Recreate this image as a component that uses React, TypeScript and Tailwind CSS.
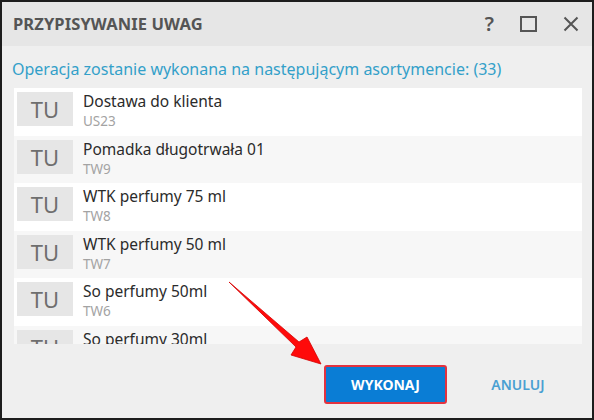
import React from "react";

type Item = { name: string; code: string };

const items: Item[] = [
  { name: "Dostawa do klienta", code: "US23" },
  { name: "Pomadka długotrwała 01", code: "TW9" },
  { name: "WTK perfumy 75 ml", code: "TW8" },
  { name: "WTK perfumy 50 ml", code: "TW7" },
  { name: "So perfumy 50ml", code: "TW6" },
  { name: "So perfumy 30ml", code: "TW5" },
];

function Row({ item, odd }: { item: Item; odd: boolean }) {
  return (
    <div
      className={`flex h-[47.6px] shrink-0 items-start ${odd ? "bg-[#f7f7f7]" : "bg-white"}`}
    >
      <div className="ml-[3px] mt-[4px] flex h-[34px] w-[56px] items-center justify-center bg-[#e6e6e6] text-[22px] leading-none text-[#6e6e6e]">
        TU
      </div>
      <div className="ml-[10px] flex flex-col">
        <span className="mt-[2px] text-[15.5px] leading-[22px] text-[#2b2b2b]">{item.name}</span>
        <span className="text-[13.5px] leading-[18px] text-[#a3a3a3]">{item.code}</span>
      </div>
    </div>
  );
}

export default function App() {
  return (
    <div className="relative flex h-[420px] w-[594px] flex-col border-2 border-[#1d1d1d] bg-[#efefef] font-['Noto_Sans','Open_Sans',sans-serif]">
      <div className="flex h-[44px] shrink-0 items-center bg-[#e6e6e6] pl-[11px] pr-[13px]">
        <h1 className="text-[16.5px] font-bold tracking-[0.1px] text-[#555]">PRZYPISYWANIE UWAG</h1>
        <div className="ml-auto flex items-center gap-[26px] text-[#555]">
          <span className="text-[20px] font-semibold leading-none">?</span>
          <span className="block h-[16px] w-[17px] border-2 border-[#555]" />
          <svg width="16" height="16" viewBox="0 0 16 16">
            <path d="M1.5 1.5 L14.5 14.5 M14.5 1.5 L1.5 14.5" stroke="#555" strokeWidth="2" />
          </svg>
        </div>
      </div>

      <p className="mt-[14px] pl-[10px] text-[16px] leading-[19px] text-[#33a0c9]">
        Operacja zostanie wykonana na następującym asortymencie: (33)
      </p>

      <div className="ml-[12px] mr-[10px] mt-[9px] flex h-[256px] flex-col overflow-hidden bg-white">
        {items.map((it, i) => (
          <Row key={it.code} item={it} odd={i % 2 === 1} />
        ))}
      </div>

      <div className="mt-[21px] flex items-center justify-end gap-[16px] pr-[19px]">
        <button className="h-[39px] w-[123px] rounded-[3px] border-2 border-[#e3323f] bg-[#0a7dd5] text-[14px] font-bold text-white">
          WYKONAJ
        </button>
        <button className="h-[39px] w-[110px] text-[14px] font-semibold text-[#4aa0d2]">
          ANULUJ
        </button>
      </div>

      <svg
        className="pointer-events-none absolute left-[-2px] top-[-2px]"
        width="594"
        height="420"
        viewBox="0 0 594 420"
      >
        <polygon
          points="229,282 299,342 307,337 321,364 291,355 296,347"
          fill="#ff0a0a"
          stroke="#d40000"
          strokeWidth="0.8"
          strokeLinejoin="round"
        />
      </svg>
    </div>
  );
}
